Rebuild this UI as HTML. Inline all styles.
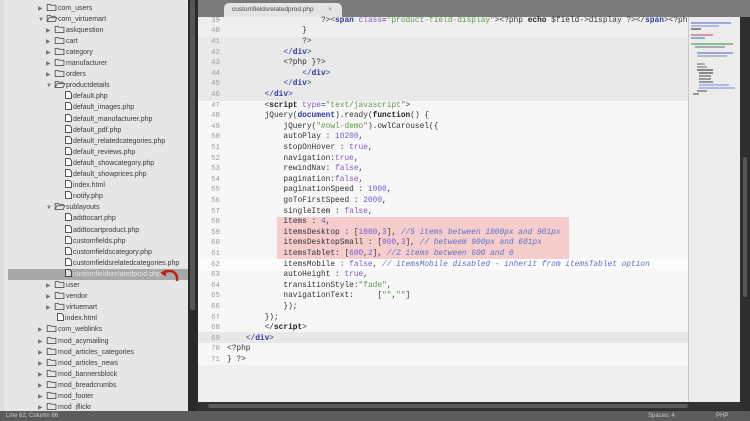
<!DOCTYPE html>
<html><head><meta charset="utf-8">
<style>
*{margin:0;padding:0;box-sizing:border-box}
body{width:750px;height:421px;overflow:hidden;background:#2b2b2b;position:relative;font-family:"Liberation Sans",sans-serif}
#side{position:absolute;left:0;top:0;width:188px;height:411px;background:#e6e6e6;border-left:4px solid #dcdcdc}
#sscroll{position:absolute;left:188px;top:0;width:10px;height:411px;background:#2a2a2a}
#sscroll div{position:absolute;left:2px;top:0;width:5px;height:310px;background:#555;border-radius:2px}
.r{position:absolute;height:11px;font-size:7px;line-height:11px;color:#3a3a3a;white-space:nowrap}
.r .a{display:inline-block;width:8px;font-size:6px;color:#777}
.r .f{display:inline-block;width:12px;height:7px;vertical-align:-1px}
.r .p{display:inline-block;width:9px;height:8px;vertical-align:-1px}
#sel{position:absolute;left:4px;top:269px;width:184px;height:11px;background:#a8a8a8}
#top{position:absolute;left:198px;top:0;width:552px;height:17px;background:#7b7b7b}
#tab{position:absolute;left:224px;top:3px;width:118px;height:14px;background:#e4e4e4;border-radius:5px 5px 0 0;font-size:6.5px;line-height:14px;color:#444;padding-left:8px}
#tab span{position:absolute;right:10px;color:#777}
#ed{position:absolute;left:198px;top:17px;width:490px;height:385px;background:#efefef;overflow:hidden}
#mm{position:absolute;left:688px;top:17px;width:52px;height:385px;background:#ececec;border-left:1px solid #c8c8c8}
#rs{position:absolute;left:740px;top:17px;width:10px;height:393px;background:#2e2e2e}
#rs div{position:absolute;left:3px;top:140px;width:4px;height:140px;background:#555;border-radius:2px}
#hs{position:absolute;left:198px;top:402px;width:542px;height:8px;background:#333}
#hs div{position:absolute;left:10px;top:2px;width:480px;height:4px;background:#5a5a5a;border-radius:2px}
#st{position:absolute;left:0;top:411px;width:750px;height:10px;background:#5c5c5c;color:#c8c8c8;font-size:6px;line-height:10px}
.band{position:absolute;left:0;width:490px}
.ln{position:absolute;left:0;width:22px;text-align:right;font-family:"Liberation Mono",monospace;font-size:7.4px;color:#9a9a9a;height:10.6px;line-height:10.6px}
.cl{position:absolute;left:29px;font-family:"Liberation Mono",monospace;font-size:7.83px;white-space:pre;color:#333;height:10.6px;line-height:10.6px}
.k{font-weight:bold;color:#222}
.t{font-weight:bold;color:#2c3a9e}
.s{color:#5a9c4a}
.n{color:#6a5fd0}
.b{color:#8757c8}
.c{color:#5c72c6;font-style:italic}
.g{color:#2c3a9e}
</style></head><body>
<div id="side">
<div id="sel"></div>
</div>
<div id="sscroll"><div></div></div>

<div id="top"></div>
<div id="tab">customfieldsrelatedprod.php<span>×</span></div>

<div id="ed">
  <div class="band" style="top:20px;height:64px;background:#e9e9e9"></div>
  <div class="band" style="top:84px;height:258px;background:#f7f7f7"></div>
  <div class="band" style="top:315px;height:11px;background:#e8e8e8"></div>
  <div class="band" style="top:326px;height:22px;background:#f7f7f7"></div>
  <div style="position:absolute;left:79px;top:200px;width:292px;height:42px;background:#f5cdcd"></div>
  <div class="band" style="top:242px;height:10.6px;background:#fbfbfb"></div>
</div>
<div id="mm">
  <div style="position:absolute;left:2px;top:4px;width:46px;height:280px">
    <div style="height:2px;width:40px;background:#9aa6dc;margin:1px 0"></div>
    <div style="height:2px;width:28px;background:#b0b8e4;margin:1px 0"></div>
    <div style="height:2px;width:10px;background:#888;margin:1px 0 4px"></div>
    <div style="height:2px;width:22px;background:#c9a;margin:1px 0"></div>
    <div style="height:2px;width:14px;background:#9ad;margin:1px 0 4px"></div>
    <div style="height:2px;width:42px;background:#8ac08a;margin:1px 0"></div>
    <div style="height:2px;width:30px;background:#aab;margin:1px 0 4px 4px"></div>
    <div style="height:2px;width:36px;background:#9aa6dc;margin:1px 0 1px 6px"></div>
    <div style="height:2px;width:30px;background:#bbb;margin:1px 0 6px 6px"></div>
    <div style="height:2px;width:8px;background:#aaa;margin:1px 0 1px 6px"></div>
    <div style="height:2px;width:10px;background:#aaa;margin:1px 0 1px 6px"></div>
    <div style="height:2px;width:16px;background:#888;margin:1px 0 1px 6px"></div>
    <div style="height:2px;width:14px;background:#888;margin:1px 0 1px 8px"></div>
    <div style="height:2px;width:12px;background:#999;margin:1px 0 1px 8px"></div>
    <div style="height:2px;width:12px;background:#999;margin:1px 0 1px 8px"></div>
    <div style="height:2px;width:14px;background:#999;margin:1px 0 1px 8px"></div>
    <div style="height:2px;width:30px;background:#b0b8e4;margin:1px 0 1px 8px"></div>
    <div style="height:2px;width:36px;background:#b0b8e4;margin:1px 0 1px 8px"></div>
    <div style="height:2px;width:10px;background:#999;margin:1px 0 1px 6px"></div>
    <div style="height:2px;width:6px;background:#999;margin:1px 0 1px 2px"></div>
  </div>
</div>
<div id="rs"><div></div></div>
<div id="hs"><div></div></div>
<div id="st"><span style="padding-left:6px">Line 62, Column 86</span><span style="position:absolute;left:648px">Spaces: 4</span><span style="position:absolute;left:716px">PHP</span></div>

<div id="sideitems"></div>
<svg style="position:absolute;left:160px;top:268px" width="22" height="16" viewBox="0 0 22 16"><path d="M3 5 C10 1 18 3 17 13" fill="none" stroke="#c0201a" stroke-width="2.4"/><path d="M0 5 L6 1.5 L6 8.5Z" fill="#c0201a"/></svg>

<script></script>
<div id="code"></div>

<!-- sidebar rows -->
<div style="position:absolute;left:0;top:0">
<div class="r" style="left:38px;top:2.5px"><span class="a">▶</span><svg class="f" viewBox="0 0 12 8"><path d="M0.5 7.5V0.5H4L5 1.5H10.5V7.5Z" fill="none" stroke="#555"/></svg>com_users</div>
<div class="r" style="left:38px;top:13.6px"><span class="a">▼</span><svg class="f" viewBox="0 0 12 8"><path d="M0.5 7.5V0.5H4L5 1.5H9.5V3M0.5 7.5L2.5 3H11.5L9.5 7.5Z" fill="none" stroke="#555"/></svg>com_virtuemart</div>
<div class="r" style="left:46px;top:24.7px"><span class="a">▶</span><svg class="f" viewBox="0 0 12 8"><path d="M0.5 7.5V0.5H4L5 1.5H10.5V7.5Z" fill="none" stroke="#555"/></svg>askquestion</div>
<div class="r" style="left:46px;top:35.8px"><span class="a">▶</span><svg class="f" viewBox="0 0 12 8"><path d="M0.5 7.5V0.5H4L5 1.5H10.5V7.5Z" fill="none" stroke="#555"/></svg>cart</div>
<div class="r" style="left:46px;top:46.9px"><span class="a">▶</span><svg class="f" viewBox="0 0 12 8"><path d="M0.5 7.5V0.5H4L5 1.5H10.5V7.5Z" fill="none" stroke="#555"/></svg>category</div>
<div class="r" style="left:46px;top:58px"><span class="a">▶</span><svg class="f" viewBox="0 0 12 8"><path d="M0.5 7.5V0.5H4L5 1.5H10.5V7.5Z" fill="none" stroke="#555"/></svg>manufacturer</div>
<div class="r" style="left:46px;top:69.1px"><span class="a">▶</span><svg class="f" viewBox="0 0 12 8"><path d="M0.5 7.5V0.5H4L5 1.5H10.5V7.5Z" fill="none" stroke="#555"/></svg>orders</div>
<div class="r" style="left:46px;top:80.2px"><span class="a">▼</span><svg class="f" viewBox="0 0 12 8"><path d="M0.5 7.5V0.5H4L5 1.5H9.5V3M0.5 7.5L2.5 3H11.5L9.5 7.5Z" fill="none" stroke="#555"/></svg>productdetails</div>
</div>
<div id="files1"></div>
<style>.fi{position:absolute;height:11px;font-size:7px;line-height:11px;color:#3a3a3a;white-space:nowrap}</style>
<div class="fi" style="left:64px;top:91.3px"><svg class="p" style="width:9px;height:8px;vertical-align:-1px" viewBox="0 0 7 8"><path d="M0.5 0.5H4.5L6.5 2.5V7.5H0.5Z" fill="#fff" stroke="#555"/></svg>default.php</div>
<div class="fi" style="left:64px;top:102.4px"><svg style="width:9px;height:8px;vertical-align:-1px" viewBox="0 0 7 8"><path d="M0.5 0.5H4.5L6.5 2.5V7.5H0.5Z" fill="#fff" stroke="#555"/></svg>default_images.php</div>
<div class="fi" style="left:64px;top:113.5px"><svg style="width:9px;height:8px;vertical-align:-1px" viewBox="0 0 7 8"><path d="M0.5 0.5H4.5L6.5 2.5V7.5H0.5Z" fill="#fff" stroke="#555"/></svg>default_manufacturer.php</div>
<div class="fi" style="left:64px;top:124.6px"><svg style="width:9px;height:8px;vertical-align:-1px" viewBox="0 0 7 8"><path d="M0.5 0.5H4.5L6.5 2.5V7.5H0.5Z" fill="#fff" stroke="#555"/></svg>default_pdf.php</div>
<div class="fi" style="left:64px;top:135.7px"><svg style="width:9px;height:8px;vertical-align:-1px" viewBox="0 0 7 8"><path d="M0.5 0.5H4.5L6.5 2.5V7.5H0.5Z" fill="#fff" stroke="#555"/></svg>default_relatedcategories.php</div>
<div class="fi" style="left:64px;top:146.8px"><svg style="width:9px;height:8px;vertical-align:-1px" viewBox="0 0 7 8"><path d="M0.5 0.5H4.5L6.5 2.5V7.5H0.5Z" fill="#fff" stroke="#555"/></svg>default_reviews.php</div>
<div class="fi" style="left:64px;top:157.9px"><svg style="width:9px;height:8px;vertical-align:-1px" viewBox="0 0 7 8"><path d="M0.5 0.5H4.5L6.5 2.5V7.5H0.5Z" fill="#fff" stroke="#555"/></svg>default_showcategory.php</div>
<div class="fi" style="left:64px;top:169px"><svg style="width:9px;height:8px;vertical-align:-1px" viewBox="0 0 7 8"><path d="M0.5 0.5H4.5L6.5 2.5V7.5H0.5Z" fill="#fff" stroke="#555"/></svg>default_showprices.php</div>
<div class="fi" style="left:64px;top:180.1px"><svg style="width:9px;height:8px;vertical-align:-1px" viewBox="0 0 7 8"><path d="M0.5 0.5H4.5L6.5 2.5V7.5H0.5Z" fill="#fff" stroke="#555"/></svg>index.html</div>
<div class="fi" style="left:64px;top:191.2px"><svg style="width:9px;height:8px;vertical-align:-1px" viewBox="0 0 7 8"><path d="M0.5 0.5H4.5L6.5 2.5V7.5H0.5Z" fill="#fff" stroke="#555"/></svg>notify.php</div>
<div class="r" style="left:46px;top:202.3px"><span class="a">▼</span><svg class="f" viewBox="0 0 12 8"><path d="M0.5 7.5V0.5H4L5 1.5H9.5V3M0.5 7.5L2.5 3H11.5L9.5 7.5Z" fill="none" stroke="#555"/></svg>sublayouts</div>
<div class="fi" style="left:64px;top:213.4px"><svg style="width:9px;height:8px;vertical-align:-1px" viewBox="0 0 7 8"><path d="M0.5 0.5H4.5L6.5 2.5V7.5H0.5Z" fill="#fff" stroke="#555"/></svg>addtocart.php</div>
<div class="fi" style="left:64px;top:224.5px"><svg style="width:9px;height:8px;vertical-align:-1px" viewBox="0 0 7 8"><path d="M0.5 0.5H4.5L6.5 2.5V7.5H0.5Z" fill="#fff" stroke="#555"/></svg>addtocartproduct.php</div>
<div class="fi" style="left:64px;top:235.6px"><svg style="width:9px;height:8px;vertical-align:-1px" viewBox="0 0 7 8"><path d="M0.5 0.5H4.5L6.5 2.5V7.5H0.5Z" fill="#fff" stroke="#555"/></svg>customfields.php</div>
<div class="fi" style="left:64px;top:246.7px"><svg style="width:9px;height:8px;vertical-align:-1px" viewBox="0 0 7 8"><path d="M0.5 0.5H4.5L6.5 2.5V7.5H0.5Z" fill="#fff" stroke="#555"/></svg>customfieldscategory.php</div>
<div class="fi" style="left:64px;top:257.8px"><svg style="width:9px;height:8px;vertical-align:-1px" viewBox="0 0 7 8"><path d="M0.5 0.5H4.5L6.5 2.5V7.5H0.5Z" fill="#fff" stroke="#555"/></svg>customfieldsrelatedcategories.php</div>
<div class="fi" style="left:64px;top:268.9px;color:#e4e4e4"><svg style="width:9px;height:8px;vertical-align:-1px" viewBox="0 0 7 8"><path d="M0.5 0.5H4.5L6.5 2.5V7.5H0.5Z" fill="#ddd" stroke="#444"/></svg>customfieldsrelatedprod.php</div>
<div class="r" style="left:46px;top:280px"><span class="a">▶</span><svg class="f" viewBox="0 0 12 8"><path d="M0.5 7.5V0.5H4L5 1.5H10.5V7.5Z" fill="none" stroke="#555"/></svg>user</div>
<div class="r" style="left:46px;top:291.1px"><span class="a">▶</span><svg class="f" viewBox="0 0 12 8"><path d="M0.5 7.5V0.5H4L5 1.5H10.5V7.5Z" fill="none" stroke="#555"/></svg>vendor</div>
<div class="r" style="left:46px;top:302.2px"><span class="a">▶</span><svg class="f" viewBox="0 0 12 8"><path d="M0.5 7.5V0.5H4L5 1.5H10.5V7.5Z" fill="none" stroke="#555"/></svg>virtuemart</div>
<div class="fi" style="left:56px;top:313.3px"><svg style="width:9px;height:8px;vertical-align:-1px" viewBox="0 0 7 8"><path d="M0.5 0.5H4.5L6.5 2.5V7.5H0.5Z" fill="#fff" stroke="#555"/></svg>index.html</div>
<div class="r" style="left:38px;top:324.4px"><span class="a">▶</span><svg class="f" viewBox="0 0 12 8"><path d="M0.5 7.5V0.5H4L5 1.5H10.5V7.5Z" fill="none" stroke="#555"/></svg>com_weblinks</div>
<div class="r" style="left:38px;top:335.5px"><span class="a">▶</span><svg class="f" viewBox="0 0 12 8"><path d="M0.5 7.5V0.5H4L5 1.5H10.5V7.5Z" fill="none" stroke="#555"/></svg>mod_acymailing</div>
<div class="r" style="left:38px;top:346.6px"><span class="a">▶</span><svg class="f" viewBox="0 0 12 8"><path d="M0.5 7.5V0.5H4L5 1.5H10.5V7.5Z" fill="none" stroke="#555"/></svg>mod_articles_categories</div>
<div class="r" style="left:38px;top:357.7px"><span class="a">▶</span><svg class="f" viewBox="0 0 12 8"><path d="M0.5 7.5V0.5H4L5 1.5H10.5V7.5Z" fill="none" stroke="#555"/></svg>mod_articles_news</div>
<div class="r" style="left:38px;top:368.8px"><span class="a">▶</span><svg class="f" viewBox="0 0 12 8"><path d="M0.5 7.5V0.5H4L5 1.5H10.5V7.5Z" fill="none" stroke="#555"/></svg>mod_bannersblock</div>
<div class="r" style="left:38px;top:379.9px"><span class="a">▶</span><svg class="f" viewBox="0 0 12 8"><path d="M0.5 7.5V0.5H4L5 1.5H10.5V7.5Z" fill="none" stroke="#555"/></svg>mod_breadcrumbs</div>
<div class="r" style="left:38px;top:391px"><span class="a">▶</span><svg class="f" viewBox="0 0 12 8"><path d="M0.5 7.5V0.5H4L5 1.5H10.5V7.5Z" fill="none" stroke="#555"/></svg>mod_footer</div>
<div class="r" style="left:38px;top:402.1px;height:8px;overflow:hidden"><span class="a">▶</span><svg class="f" viewBox="0 0 12 8"><path d="M0.5 7.5V0.5H4L5 1.5H10.5V7.5Z" fill="none" stroke="#555"/></svg>mod_jflickr</div>

<!-- code -->
<div style="position:absolute;left:198px;top:0;width:490px;height:402px;overflow:hidden">
<div class="ln" style="top:15.7px">39</div><div class="cl" style="top:15.7px">                    ?&gt;&lt;<span class="t">span</span> <span class="b">class</span>=<span class="s">"product-field-display"</span>&gt;&lt;?php <span class="k">echo</span> $field-&gt;display ?&gt;&lt;/<span class="t">span</span>&gt;&lt;?php</div>
<div class="ln" style="top:26.3px">40</div><div class="cl" style="top:26.3px">                }</div>
<div class="ln" style="top:36.9px">41</div><div class="cl" style="top:36.9px">                ?&gt;</div>
<div class="ln" style="top:47.5px">42</div><div class="cl g" style="top:47.5px">            &lt;/<b>div</b>&gt;</div>
<div class="ln" style="top:58.1px">43</div><div class="cl" style="top:58.1px">            &lt;?php }?&gt;</div>
<div class="ln" style="top:68.7px">44</div><div class="cl g" style="top:68.7px">                &lt;/<b>div</b>&gt;</div>
<div class="ln" style="top:79.3px">45</div><div class="cl g" style="top:79.3px">            &lt;/<b>div</b>&gt;</div>
<div class="ln" style="top:89.9px">46</div><div class="cl g" style="top:89.9px">        &lt;/<b>div</b>&gt;</div>
<div class="ln" style="top:100.5px">47</div><div class="cl" style="top:100.5px">        &lt;<span class="k">script</span> <span class="b">type</span>=<span class="s">"text/javascript"</span>&gt;</div>
<div class="ln" style="top:111.1px">48</div><div class="cl" style="top:111.1px">        jQuery(<span class="t">document</span>).ready(<span class="k">function</span>() {</div>
<div class="ln" style="top:121.7px">49</div><div class="cl" style="top:121.7px">            jQuery(<span class="s">"#owl-demo"</span>).owlCarousel({</div>
<div class="ln" style="top:132.3px">50</div><div class="cl" style="top:132.3px">            autoPlay : <span class="n">10200</span>,</div>
<div class="ln" style="top:142.9px">51</div><div class="cl" style="top:142.9px">            stopOnHover : <span class="b">true</span>,</div>
<div class="ln" style="top:153.5px">52</div><div class="cl" style="top:153.5px">            navigation:<span class="b">true</span>,</div>
<div class="ln" style="top:164.1px">53</div><div class="cl" style="top:164.1px">            rewindNav: <span class="b">false</span>,</div>
<div class="ln" style="top:174.7px">54</div><div class="cl" style="top:174.7px">            pagination:<span class="b">false</span>,</div>
<div class="ln" style="top:185.3px">55</div><div class="cl" style="top:185.3px">            paginationSpeed : <span class="n">1000</span>,</div>
<div class="ln" style="top:195.9px">56</div><div class="cl" style="top:195.9px">            goToFirstSpeed : <span class="n">2000</span>,</div>
<div class="ln" style="top:206.5px">57</div><div class="cl" style="top:206.5px">            singleItem : <span class="b">false</span>,</div>
<div class="ln" style="top:217.1px">58</div><div class="cl" style="top:217.1px">            items : <span class="n">4</span>,</div>
<div class="ln" style="top:227.7px">59</div><div class="cl" style="top:227.7px">            itemsDesktop : [<span class="n">1000</span>,<span class="n">3</span>], <span class="c">//5 items between 1000px and 901px</span></div>
<div class="ln" style="top:238.3px">60</div><div class="cl" style="top:238.3px">            itemsDesktopSmall : [<span class="n">900</span>,<span class="n">3</span>], <span class="c">// betweem 900px and 601px</span></div>
<div class="ln" style="top:248.9px">61</div><div class="cl" style="top:248.9px">            itemsTablet: [<span class="n">600</span>,<span class="n">2</span>], <span class="c">//2 items between 600 and 0</span></div>
<div class="ln" style="top:259.5px">62</div><div class="cl" style="top:259.5px">            itemsMobile : <span class="b">false</span>, <span class="c">// itemsMobile disabled - inherit from itemsTablet option</span></div>
<div class="ln" style="top:270.1px">63</div><div class="cl" style="top:270.1px">            autoHeight : <span class="b">true</span>,</div>
<div class="ln" style="top:280.7px">64</div><div class="cl" style="top:280.7px">            transitionStyle:<span class="s">"fade"</span>,</div>
<div class="ln" style="top:291.3px">65</div><div class="cl" style="top:291.3px">            navigationText:     [<span class="s">""</span>,<span class="s">""</span>]</div>
<div class="ln" style="top:301.9px">66</div><div class="cl" style="top:301.9px">            });</div>
<div class="ln" style="top:312.5px">67</div><div class="cl" style="top:312.5px">        });</div>
<div class="ln" style="top:323.1px">68</div><div class="cl" style="top:323.1px">        &lt;/<span class="k">script</span>&gt;</div>
<div class="ln" style="top:333.7px">69</div><div class="cl g" style="top:333.7px">    &lt;/<b>div</b>&gt;</div>
<div class="ln" style="top:344.3px">70</div><div class="cl" style="top:344.3px">&lt;?php</div>
<div class="ln" style="top:354.9px">71</div><div class="cl" style="top:354.9px">} ?&gt;</div>
</div>
</body></html>
